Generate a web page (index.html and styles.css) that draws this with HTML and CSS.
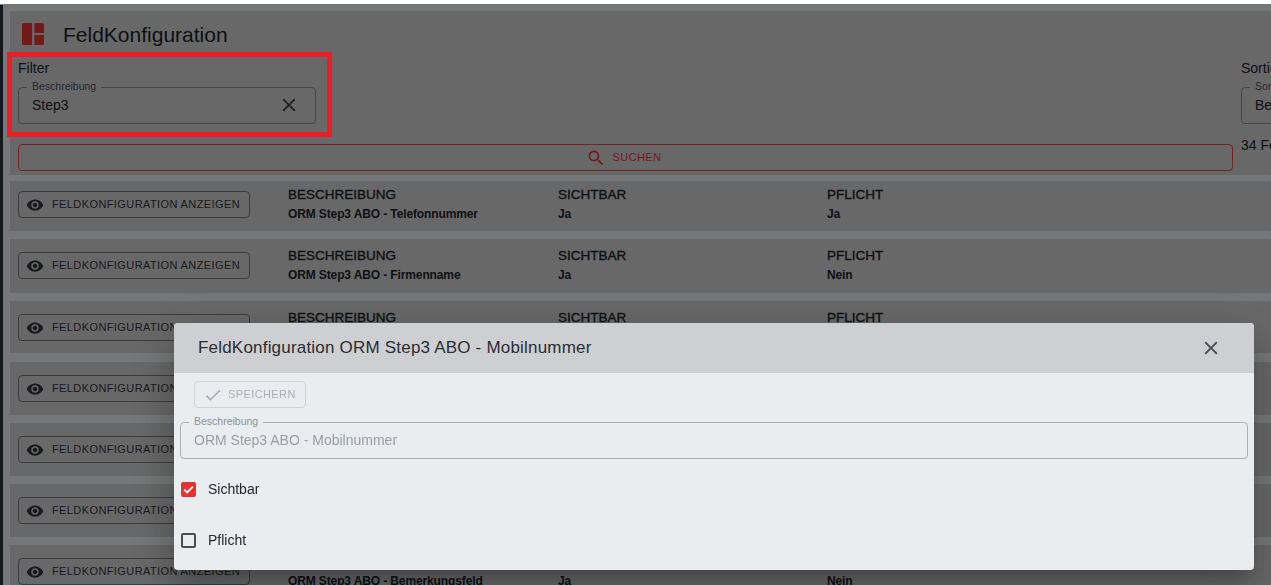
FILE: index.html
```html
<!DOCTYPE html>
<html lang="de">
<head>
<meta charset="utf-8">
<title>FeldKonfiguration</title>
<link rel="stylesheet" href="styles.css">
</head>
<body>
<div class="app">
  <div class="rail"></div>
  <main class="content">
    <section class="card head-card">
      <header class="title-row">
        <svg class="logo" viewBox="0 0 24 24" width="22" height="22"><path d="M2 0h9v24H2a2 2 0 0 1-2-2V2a2 2 0 0 1 2-2zM13.5 0H22a2 2 0 0 1 2 2v9H13.5zM13.5 13H24v9a2 2 0 0 1-2 2h-8.500z"/></svg>
        <h1>FeldKonfiguration</h1>
      </header>
      <div class="filter-row">
        <div class="filter-col">
          <div class="group-label">Filter</div>
          <div class="field">
            <span class="legend">Beschreibung</span>
            <span class="value">Step3</span>
            <svg class="x" viewBox="0 0 24 24" width="22" height="22"><path d="M19 6.41 17.59 5 12 10.59 6.41 5 5 6.41 10.59 12 5 17.59 6.41 19 12 13.41 17.59 19 19 17.59 13.41 12z"/></svg>
          </div>
          <button class="search" type="button">
            <svg viewBox="0 0 24 24" width="20" height="20"><path d="M15.5 14h-.79l-.28-.27A6.47 6.47 0 0 0 16 9.5 6.5 6.5 0 1 0 9.5 16c1.61 0 3.09-.59 4.23-1.57l.27.28v.79l5 4.99L20.49 19l-4.99-5zm-6 0C7.01 14 5 11.99 5 9.5S7.01 5 9.5 5 14 7.01 14 9.5 11.99 14 9.5 14z"/></svg>
            SUCHEN
          </button>
        </div>
        <div class="sort-col">
          <div class="group-label">Sortierung</div>
          <div class="field sort-field">
            <span class="legend">Sortierung</span>
            <span class="value">Beschreibung</span>
          </div>
          <div class="count">34 Felder</div>
        </div>
      </div>
    </section>

    <section class="card row r1">
      <button class="show" type="button"><svg viewBox="0 0 24 24" width="18" height="18"><path d="M12 4.5C7 4.500 2.730 7.610 1 12c1.730 4.390 6 7.500 11 7.500s9.270-3.110 11-7.500c-1.730-4.390-6-7.500-11-7.500zM12 17c-2.760 0-5-2.240-5-5s2.240-5 5-5 5 2.240 5 5-2.240 5-5 5zm0-8c-1.660 0-3 1.340-3 3s1.340 3 3 3 3-1.340 3-3-1.340-3-3-3z"/></svg>FELDKONFIGURATION ANZEIGEN</button>
      <div class="cell c1"><b>BESCHREIBUNG</b><span>ORM Step3 ABO - Telefonnummer</span></div>
      <div class="cell c2"><b>SICHTBAR</b><span>Ja</span></div>
      <div class="cell c3"><b>PFLICHT</b><span>Ja</span></div>
    </section>
    <section class="card row r2">
      <button class="show" type="button"><svg viewBox="0 0 24 24" width="18" height="18"><path d="M12 4.5C7 4.500 2.730 7.610 1 12c1.730 4.390 6 7.500 11 7.500s9.270-3.110 11-7.500c-1.730-4.390-6-7.500-11-7.500zM12 17c-2.760 0-5-2.240-5-5s2.240-5 5-5 5 2.240 5 5-2.240 5-5 5zm0-8c-1.660 0-3 1.340-3 3s1.340 3 3 3 3-1.340 3-3-1.340-3-3-3z"/></svg>FELDKONFIGURATION ANZEIGEN</button>
      <div class="cell c1"><b>BESCHREIBUNG</b><span>ORM Step3 ABO - Firmenname</span></div>
      <div class="cell c2"><b>SICHTBAR</b><span>Ja</span></div>
      <div class="cell c3"><b>PFLICHT</b><span>Nein</span></div>
    </section>
    <section class="card row r3">
      <button class="show" type="button"><svg viewBox="0 0 24 24" width="18" height="18"><path d="M12 4.5C7 4.500 2.730 7.610 1 12c1.730 4.390 6 7.500 11 7.500s9.270-3.110 11-7.500c-1.730-4.390-6-7.500-11-7.500zM12 17c-2.760 0-5-2.240-5-5s2.240-5 5-5 5 2.240 5 5-2.240 5-5 5zm0-8c-1.660 0-3 1.340-3 3s1.340 3 3 3 3-1.340 3-3-1.340-3-3-3z"/></svg>FELDKONFIGURATION ANZEIGEN</button>
      <div class="cell c1"><b>BESCHREIBUNG</b><span>ORM Step3 ABO - Mobilnummer</span></div>
      <div class="cell c2"><b>SICHTBAR</b><span>Ja</span></div>
      <div class="cell c3"><b>PFLICHT</b><span>Nein</span></div>
    </section>
    <section class="card row">
      <button class="show" type="button"><svg viewBox="0 0 24 24" width="18" height="18"><path d="M12 4.5C7 4.500 2.730 7.610 1 12c1.730 4.390 6 7.500 11 7.500s9.270-3.110 11-7.500c-1.730-4.390-6-7.500-11-7.500zM12 17c-2.760 0-5-2.240-5-5s2.240-5 5-5 5 2.240 5 5-2.240 5-5 5zm0-8c-1.660 0-3 1.340-3 3s1.340 3 3 3 3-1.340 3-3-1.340-3-3-3z"/></svg>FELDKONFIGURATION ANZEIGEN</button>
    </section>
    <section class="card row">
      <button class="show" type="button"><svg viewBox="0 0 24 24" width="18" height="18"><path d="M12 4.5C7 4.500 2.730 7.610 1 12c1.730 4.390 6 7.500 11 7.500s9.270-3.110 11-7.500c-1.730-4.390-6-7.500-11-7.500zM12 17c-2.760 0-5-2.240-5-5s2.240-5 5-5 5 2.240 5 5-2.240 5-5 5zm0-8c-1.660 0-3 1.340-3 3s1.340 3 3 3 3-1.340 3-3-1.340-3-3-3z"/></svg>FELDKONFIGURATION ANZEIGEN</button>
    </section>
    <section class="card row">
      <button class="show" type="button"><svg viewBox="0 0 24 24" width="18" height="18"><path d="M12 4.5C7 4.500 2.730 7.610 1 12c1.730 4.390 6 7.500 11 7.500s9.270-3.110 11-7.500c-1.730-4.390-6-7.500-11-7.500zM12 17c-2.760 0-5-2.240-5-5s2.240-5 5-5 5 2.240 5 5-2.240 5-5 5zm0-8c-1.660 0-3 1.340-3 3s1.340 3 3 3 3-1.340 3-3-1.340-3-3-3z"/></svg>FELDKONFIGURATION ANZEIGEN</button>
    </section>
    <section class="card row">
      <button class="show" type="button"><svg viewBox="0 0 24 24" width="18" height="18"><path d="M12 4.5C7 4.500 2.730 7.610 1 12c1.730 4.390 6 7.500 11 7.500s9.270-3.110 11-7.500c-1.730-4.390-6-7.500-11-7.500zM12 17c-2.760 0-5-2.240-5-5s2.240-5 5-5 5 2.240 5 5-2.240 5-5 5zm0-8c-1.660 0-3 1.340-3 3s1.340 3 3 3 3-1.340 3-3-1.340-3-3-3z"/></svg>FELDKONFIGURATION ANZEIGEN</button>
      <div class="cell c1"><b>BESCHREIBUNG</b><span>ORM Step3 ABO - Bemerkungsfeld</span></div>
      <div class="cell c2"><b>SICHTBAR</b><span>Ja</span></div>
      <div class="cell c3"><b>PFLICHT</b><span>Nein</span></div>
    </section>
  </main>
</div>

<div class="highlight"></div>
<div class="backdrop"></div>

<div class="modal">
  <header class="modal-head">
    <h2>FeldKonfiguration ORM Step3 ABO - Mobilnummer</h2>
    <svg class="modal-x" viewBox="0 0 24 24" width="22" height="22"><path d="M19 6.41 17.59 5 12 10.59 6.41 5 5 6.41 10.59 12 5 17.59 6.41 19 12 13.41 17.59 19 19 17.59 13.41 12z"/></svg>
  </header>
  <div class="modal-body">
    <button class="save" type="button" disabled>
      <svg viewBox="0 0 24 24" width="20" height="20"><path d="M9 16.170 4.830 12l-1.420 1.410L9 19 21 7l-1.410-1.410z"/></svg>
      SPEICHERN
    </button>
    <div class="field modal-field">
      <span class="legend">Beschreibung</span>
      <span class="value">ORM Step3 ABO - Mobilnummer</span>
    </div>
    <div class="checks">
      <label class="check">
        <span class="box on"><svg viewBox="0 0 16 16" width="15" height="15"><path d="M3.500 8.200 6.600 11.200 12.600 5" fill="none" stroke="#fff" stroke-width="2"/></svg></span>
        Sichtbar
      </label>
      <label class="check">
        <span class="box"></span>
        Pflicht
      </label>
    </div>
  </div>
</div>
</body>
</html>
```
FILE: styles.css
```css
* { box-sizing: border-box; }
html, body { margin: 0; height: 100%; }
body {
  overflow: hidden;
  background: #fff;
  font-family: "Liberation Sans", Arial, sans-serif;
  color: #1b1f27;
}
.app { height: 585px; padding-top: 4px; display: flex; overflow: hidden; }
.rail { width: 3px; flex: none; background: #2a2f3d; margin-top: 1px; }
.content {
  flex: 1;
  background: #edeff0;
  padding: 7px 0 0 7px;
  display: flex;
  flex-direction: column;
  gap: 8px;
  min-width: 0;
  overflow: hidden;
}
.card { background: #d1d1d3; flex: none; }
.head-card { height: 164px; padding: 0 0 0 8px; width: 1400px; }
.title-row { display: flex; align-items: center; height: 48px; padding-left: 4px; gap: 19px; }
.logo { fill: #e53333; margin-top: -2px; }
h1 { margin: 0; font-size: 21px; font-weight: 400; }
.filter-row { display: flex; gap: 8px; }
.filter-col { width: 1215px; flex: none; }
.sort-col { width: 300px; flex: none; }
.group-label { font-size: 14px; line-height: 16px; margin-top: 1px; }
.field {
  position: relative;
  height: 37px;
  margin-top: 11px;
  border: 1px solid #8b8b8d;
  border-radius: 4px;
  display: flex;
  align-items: center;
  padding: 0 13px 2px;
  font-size: 14px;
  width: 298px;
}
.legend {
  position: absolute;
  left: 8px;
  top: -8px;
  padding: 0 5px;
  font-size: 10.5px;
  line-height: 12px;
  color: #505256;
  background: #d1d1d3;
}
.value { flex: 1; }
.x { fill: #44474d; margin-right: 2px; }
.search {
  display: flex;
  align-items: center;
  justify-content: center;
  gap: 7px;
  margin-top: 20px;
  width: 1215px;
  height: 27px;
  padding: 0 4px 1px 0;
  border: 1px solid #e0494c;
  border-radius: 4px;
  background: transparent;
  color: #e53333;
  font: 400 11px "Liberation Sans", Arial, sans-serif;
  letter-spacing: .4px;
}
.search svg { fill: #e53333; margin-top: 1px; }
.sort-field { width: 300px; }
.count { margin-top: 13px; font-size: 14px; line-height: 16px; }
.row {
  display: flex;
  align-items: flex-start;
  width: 1400px;
  height: 53px;
  padding: 13px 0 0 8px;
  position: relative;
}
.r1 { height: 50px; margin-top: -2px; padding-top: 10px; }
.r2 { height: 54px; }
.r3 { height: 52px; margin-bottom: 1px; }
.show {
  display: flex;
  align-items: center;
  gap: 8px;
  width: 232px;
  height: 27px;
  padding: 0 0 1px 7px;
  border: 1px solid #77787b;
  border-radius: 4px;
  background: transparent;
  color: #31353c;
  font: 400 11px "Liberation Sans", Arial, sans-serif;
  letter-spacing: .4px;
  white-space: nowrap;
  flex: none;
}
.show svg { fill: #31353c; flex: none; margin-top: 2px; }
.cell { display: flex; flex-direction: column; position: absolute; top: 7px; }
.r1 .cell { top: 4px; }
.cell b { font-size: 13.5px; line-height: 20px; font-weight: 400; -webkit-text-stroke: .35px currentColor; }
.cell span { font-size: 12px; line-height: 18px; font-weight: 700; letter-spacing: -.12px; }
.c1 { left: 278px; }
.c2 { left: 548px; }
.c3 { left: 817px; }

.highlight {
  position: fixed;
  left: 7px;
  top: 52px;
  width: 325px;
  height: 85px;
  border: 5px solid #ee1c25;
  z-index: 3;
}
.backdrop {
  position: fixed;
  inset: 4px 0 0 0;
  background: rgba(0, 0, 0, .5);
  z-index: 1;
}
.modal {
  position: fixed;
  left: 174px;
  top: 323px;
  width: 1080px;
  height: 247px;
  border-radius: 4px;
  overflow: hidden;
  background: #e9edf0;
  box-shadow: 0 11px 15px -7px rgba(0,0,0,.2), 0 24px 38px 3px rgba(0,0,0,.14), 0 9px 46px 8px rgba(0,0,0,.12);
  z-index: 2;
}
.modal-head {
  display: flex;
  align-items: center;
  justify-content: space-between;
  height: 50px;
  padding: 0 32px 0 24px;
  background: #cecfd2;
}
h2 { margin: 0; font-size: 17px; font-weight: 400; color: #2a2d33; letter-spacing: .2px; }
.modal-x { fill: #4a4c52; }
.modal-body { padding: 8px 6px 0; }
.save {
  display: flex;
  align-items: center;
  gap: 5px;
  width: 112px;
  height: 27px;
  margin-left: 14px;
  padding: 0 0 1px 8px;
  border: 1px solid #cfd3d6;
  border-radius: 4px;
  background: transparent;
  color: #abafb3;
  font: 400 11px "Liberation Sans", Arial, sans-serif;
  letter-spacing: .4px;
}
.save svg { fill: #abafb3; margin-top: 2px; }
.modal-field {
  width: 1068px;
  margin-top: 14px;
  border-color: #abafb3;
  color: #9a9ea3;
}
.modal-field .legend { background: #e9edf0; color: #8d9196; }
.checks { padding-top: 4px; }
.check { display: flex; align-items: center; gap: 12px; font-size: 14px; height: 51px; color: #26292f; }
.box {
  width: 15px;
  height: 15px;
  margin-left: 1px;
  border: 2px solid #4a4c50;
  border-radius: 2px;
  margin-top: 2px;
  flex: none;
  display: block;
}
.box.on { background: #e53333; border: 0; }
.box.on svg { display: block; }
```
